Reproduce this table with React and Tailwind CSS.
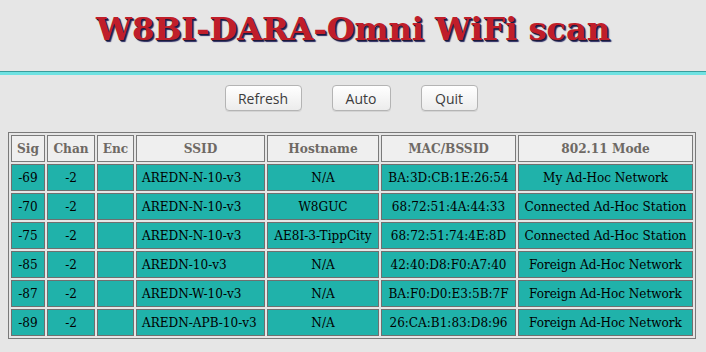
import React from "react";

const rows = [
  ["-69", "-2", "", "AREDN-N-10-v3", "N/A", "BA:3D:CB:1E:26:54", "My Ad-Hoc Network"],
  ["-70", "-2", "", "AREDN-N-10-v3", "W8GUC", "68:72:51:4A:44:33", "Connected Ad-Hoc Station"],
  ["-75", "-2", "", "AREDN-N-10-v3", "AE8I-3-TippCity", "68:72:51:74:4E:8D", "Connected Ad-Hoc Station"],
  ["-85", "-2", "", "AREDN-10-v3", "N/A", "42:40:D8:F0:A7:40", "Foreign Ad-Hoc Network"],
  ["-87", "-2", "", "AREDN-W-10-v3", "N/A", "BA:F0:D0:E3:5B:7F", "Foreign Ad-Hoc Network"],
  ["-89", "-2", "", "AREDN-APB-10-v3", "N/A", "26:CA:B1:83:D8:96", "Foreign Ad-Hoc Network"],
];

const headers = [
  ["Sig", "w-[34px]"],
  ["Chan", "w-[48px]"],
  ["Enc", "w-[37px]"],
  ["SSID", "w-[129px]"],
  ["Hostname", "w-[112px]"],
  ["MAC/BSSID", "w-[135px]"],
  ["802.11 Mode", "w-[175px]"],
];

const Button = ({ children, w }) => (
  <button
    className={`${w} h-[26px] rounded-[4px] border border-[#b4b4b4] bg-gradient-to-b from-white to-[#ececec] text-[14px] text-[#3c3c3c] font-['Open_Sans',sans-serif] shadow-[0_1px_0_rgba(0,0,0,0.08)]`}
  >
    {children}
  </button>
);

export default function App() {
  return (
    <div className="w-[706px] h-[352px] bg-[#e6e6e6] overflow-hidden font-['DejaVu_Serif',serif]">
      <h1 className="h-[71px] pt-[10px] text-center text-[32px] leading-[38px] font-bold text-[#c01e2a] [text-shadow:1px_1px_0_#1a1a3a,2px_2px_1px_#2a2a60]">
        W8BI-DARA-Omni WiFi scan
      </h1>
      <div className="h-[4px] border-t border-[#3a9c9c] bg-[#6ee2e2]" />
      <div className="flex justify-center gap-[30px] pt-[10px] pr-[4px]">
        <Button w="w-[77px]">Refresh</Button>
        <Button w="w-[59px]">Auto</Button>
        <Button w="w-[57px]">Quit</Button>
      </div>
      <div className="pl-[8px] pt-[21px] font-['DejaVu_Serif_Condensed','DejaVu_Serif',serif] font-stretch-condensed">
        <table className="table-fixed w-[688px] border-separate border-spacing-[2px] border border-[#7a7a7a]">
          <thead>
            <tr>
              {headers.map(([h, w]) => (
                <th
                  key={h}
                  className={`${w} p-0 leading-[25px] border border-[#7a7a7a] bg-[#efefef] text-[13.5px] font-bold text-[#6e6964] text-center`}
                >
                  {h}
                </th>
              ))}
            </tr>
          </thead>
          <tbody>
            {rows.map((r) => (
              <tr key={r[5]}>
                {r.map((c, i) => (
                  <td
                    key={i}
                    className={`p-0 leading-[25px] border border-[#6f6f6f] bg-[#20b2aa] text-[13.4px] text-black whitespace-nowrap ${
                      i === 3 ? "text-left pl-[5px]" : "text-center"
                    }`}
                  >
                    {c}
                  </td>
                ))}
              </tr>
            ))}
          </tbody>
        </table>
      </div>
    </div>
  );
}
